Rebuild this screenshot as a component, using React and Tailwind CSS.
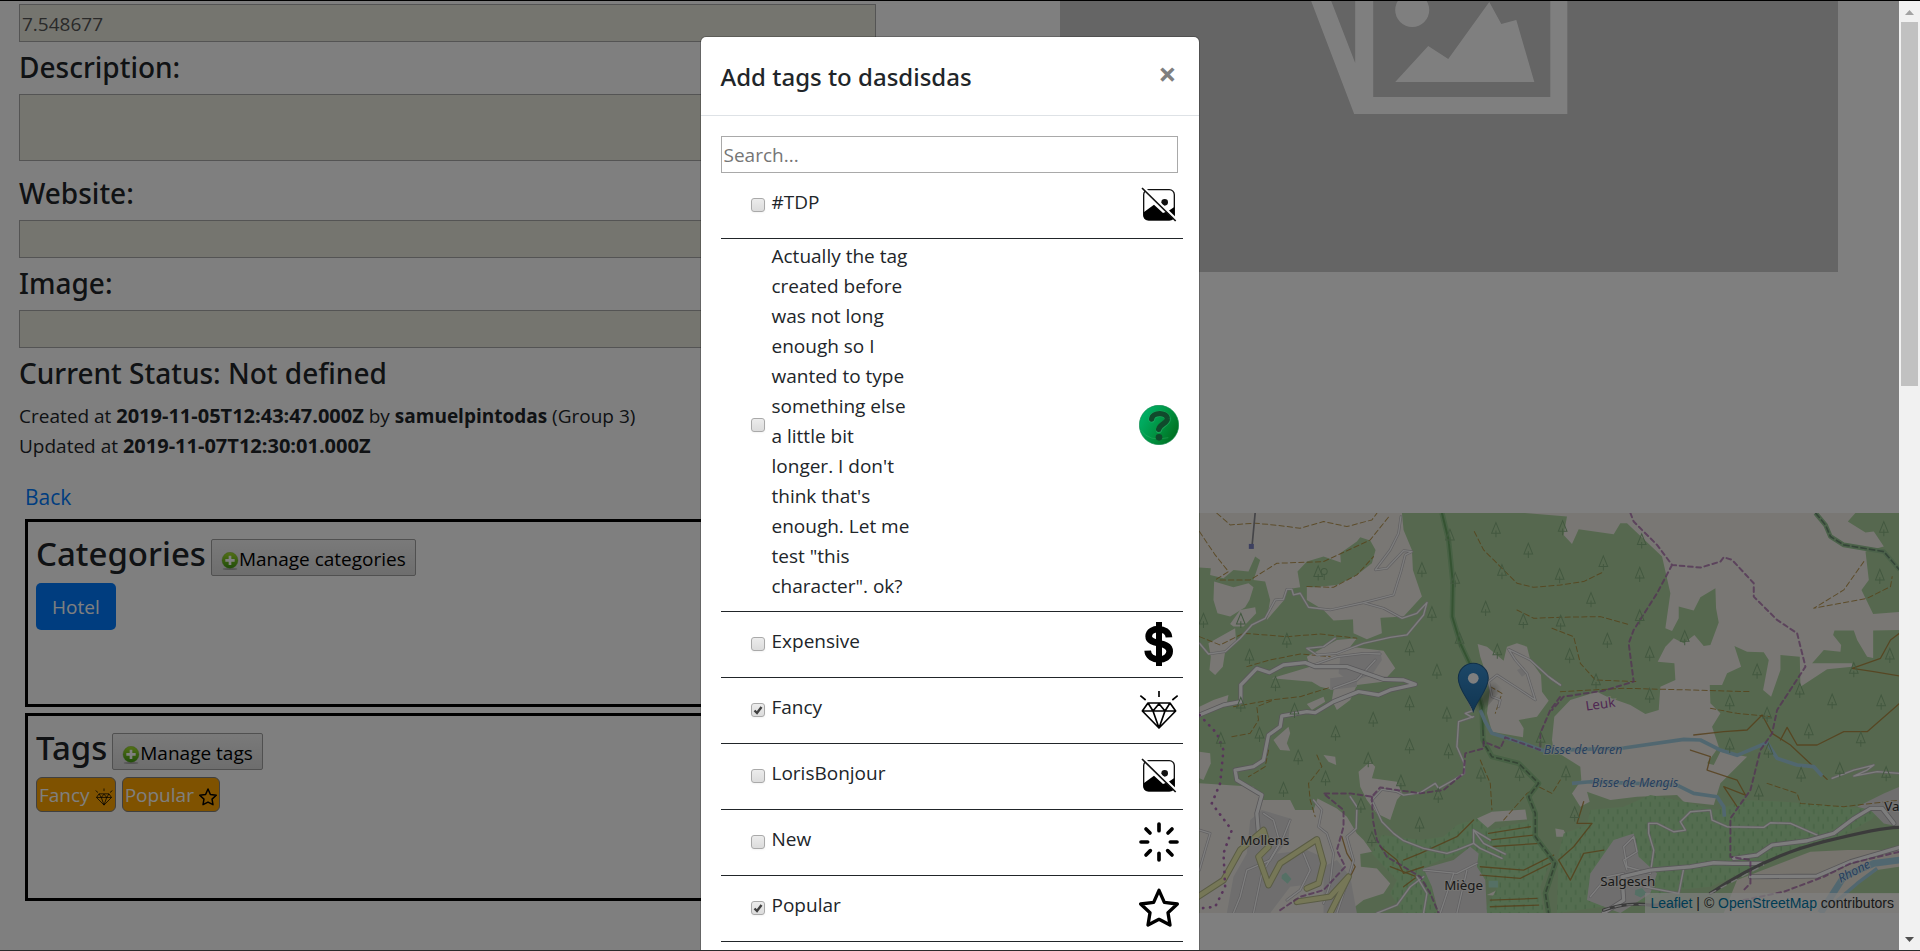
import React from "react";

const LAND = [
  "28,39 635,39 640,90 665,150 668,210 695,290 640,350 600,352 430,362 400,330 350,300 350,260 370,262 440,255 500,225 545,190 556,150 540,122 510,112 500,125 450,160 452,188 400,170 350,185 322,215 330,262 290,268 282,300 230,360 240,300 225,245 190,240 210,180 195,170 175,215 130,210 100,235 60,225 62,205 28,203",
  "72,245 130,262 175,250 190,262 178,300 165,322 120,350 82,340 70,300",
  "120,372 150,330 195,322 198,340 160,380 130,380",
  "55,430 135,385 138,430 105,455 98,500 75,525 58,510 62,470",
  "488,350 570,348 575,400 530,418 490,400",
  "245,535 360,500 350,470 440,420 500,415 480,440 580,452 615,505 578,545 500,555 480,600 440,630 425,600 430,570 390,560 365,545",
  "350,612 400,590 405,605 365,630",
  "250,720 295,680 300,700 290,730 300,752 270,750",
  "28,620 70,600 115,585 110,610 60,630 28,640",
  "400,765 435,770 438,795 415,785",
  "28,755 60,760 62,790 40,840 28,835",
  "862,432 890,440 940,482 950,440 980,430 1010,440 1020,480 1052,525 1055,575 1075,602 1040,650 985,660 1000,685 998,712 905,695 890,640 900,560 880,500 870,470",
  "28,850 190,860 215,900 300,900 315,930 370,930 382,895 440,925 470,950 500,1000 520,1020 545,1055 510,1062 512,1100 560,1105 600,1150 580,1180 520,1200 470,1239 28,1239",
  "505,815 540,785 555,800 545,835 620,845 636,880 620,900 600,960 560,940 530,900 510,860",
  "860,955 905,935 1005,928 1010,958 915,965 890,985",
  "930,1165 1015,1165 1018,1195 890,1185",
  "1095,985 1120,990 1130,1010 1098,1010",
];
const LAND_EAST = [
  "-80,39 50,50 40,105 65,132 85,88 190,103 210,70 230,70 335,170 360,280 345,385 365,393 385,355 385,320 430,332 450,292 495,265 497,325 505,368 480,435 460,438 432,405 400,430 370,415 345,440 322,485 372,490 375,540 330,560 325,630 285,642 240,615 170,590 140,575 60,600 12,650 5,720 10,750 90,800 93,840 65,880 90,920 118,905 110,875 180,900 260,890 380,885 400,905 490,915 510,850 590,770 510,755 490,795 470,790 505,740 485,680 510,640 480,610 478,555 515,555 530,520 572,500 552,438 590,455 640,457 655,480 638,570 662,590 690,510 690,465 748,470 750,560 830,508 905,500 905,490 785,490 820,450 870,455 872,435 848,405 852,392 910,392 920,420 950,470 968,474 968,392 1060,390 1060,335 968,342 933,270 955,240 945,155 1000,140 970,95 945,98 892,65 915,39",
];
const VINES = [
  "575,1005 690,1020 760,1010 800,975 860,955 900,990 1025,960 1030,1010 1085,1075 1070,1110 1050,1160 1060,1239 880,1239 920,1165 860,1110 850,1040 780,1070 700,1100 720,1150 740,1239 640,1239 600,1180 620,1140 545,1060",
];
const VINES_EAST = [
  "20,1239 25,1060 40,1000 110,975 120,930 220,920 300,885 380,900 500,930 590,900 700,905 820,915 990,930 960,960 880,1005 780,1040 640,1090 480,1160 380,1170 300,1200",
];
const TOWNS = [
  "180,960 215,930 300,955 295,1020 260,1060 350,1050 395,1070 380,1150 300,1160 240,1239 110,1239 130,1130 170,1060",
  "450,470 570,452 575,480 545,525 480,545 445,520",
  "420,535 500,525 500,560 420,570",
  "700,1105 790,1080 840,1040 865,1060 860,1100 885,1140 890,1239 745,1239 725,1160",
  "400,1100 440,1080 480,1130 500,1239 400,1239",
  "1200,1120 1270,1020 1330,1000 1345,1070 1400,1120 1380,1180 1290,1239 1190,1200",
  "2000,920 2080,880 2127,860 2127,980 2080,970 2040,930",
  "980,510 1000,500 1010,520 995,530",
];
const TREES = [
  [40, 360], [152, 360], [290, 420], [178, 468], [256, 550], [152, 612], [313, 630], [208, 702], [92, 718], [324, 770],
  [436, 698], [549, 657], [658, 608], [658, 443], [740, 513], [725, 340], [695, 208], [779, 108], [795, 238], [886, 324],
  [917, 88], [1014, 150], [935, 214], [999, 362], [808, 418], [921, 452], [770, 642], [658, 737], [775, 752], [872, 822],
  [988, 820], [632, 845], [744, 885], [534, 778], [406, 833], [280, 867], [512, 915], [688, 972], [545, 1015], [384, 218],
  [1051, 715], [1117, 82], [1239, 188], [1108, 226], [1348, 222], [1354, 122], [1202, 298], [1348, 350], [1111, 366], [1251, 420],
  [1138, 466], [1378, 460], [1217, 542], [1378, 585], [1700, 512], [1618, 605], [1730, 642], [1828, 570], [1925, 602], [2072, 605],
  [1855, 692], [2011, 716], [1618, 735], [1734, 750], [1832, 822], [1948, 808], [2087, 820], [1705, 876], [1153, 940], [1127, 818],
  [2080, 85], [2068, 228], [2098, 465], [1990, 508], [1483, 412],
];
const MINOR = [
  "28,430 55,462 105,455 150,415 185,375 225,355 255,300 280,298 290,268 305,268 310,285 330,280 355,322 420,330 520,308 610,285 632,215 645,165 665,155 640,152 590,205 555,210 600,150 625,100 632,50",
  "520,308 580,325 635,355 680,340 710,308 700,345 650,405 600,412 520,430 440,460 380,465 350,445 400,440 435,415",
  "370,495 440,470 520,460 570,462",
  "430,565 500,540 555,480",
  "1110,555 1075,530 1020,480 955,448 975,480 1010,520 1035,600 990,570 920,525 895,545 905,590 930,600 925,620",
  "846,652 825,640 848,632 835,600",
  "850,650 805,665 800,740 822,790 822,820 790,840 745,865 735,850 690,878 640,885 620,875 575,868 545,900",
  "545,900 575,965 610,1000 640,1022 700,1045 770,1060 800,1050 850,1030 850,990 900,1020",
  "850,1030 870,1045 935,1075",
  "850,990 880,1030 945,1062",
  "370,900 395,930 385,980 410,1000 430,1060 420,1150 400,1210",
  "480,890 500,920 498,985 470,1010 490,1080 470,1150 440,1239",
  "220,940 250,960 270,1030 240,1080 170,1110 150,1190 130,1239",
  "300,960 280,1010 215,1120 190,1239",
  "340,1060 360,1110 330,1170 290,1200",
  "700,1110 800,1120 860,1090",
  "680,1130 710,1180 700,1239",
  "790,1120 750,1239",
  "830,1110 800,1239",
  "28,990 60,1000 45,1050 28,1110",
  "560,1239 620,1215 660,1160 700,1130",
  "1080,535 1110,555",
  "1925,835 1990,810 2050,795 2030,810 1990,828 2060,815 2127,820",
  "1310,1110 1300,1080 1340,1055 1330,1010 1300,1040 1310,1100 1380,1120 1390,1050 1375,1000 1375,970 1400,970 1450,995 1485,990 1470,965 1500,935 1560,930 1565,960 1610,980 1720,982 1740,968 1800,970 1880,1005",
  "1200,1190 1250,1130 1300,1120",
  "1480,1105 1465,1180 1360,1160",
];
const MAJOR = [
  "28,645 100,615 152,605 152,555 200,505 238,518 280,495 345,488 375,500 470,500 580,538 640,540 675,553 600,570 565,585 505,575 430,605 375,638 350,635 275,648 270,680 235,705 220,780 190,800 135,810 140,840 215,885 200,940 205,1000",
  "1240,1239 1300,1200 1295,1130 1380,1110 1500,1100 1570,1088 1630,1090 1715,1090",
  "1630,1075 1700,1065 1745,1035 1850,1022 1930,1000 1990,955 2040,925 2075,925 2110,970",
  "1680,1130 1880,1128 1980,1085 2127,1042",
];
const TRACKS = [
  "80,40 120,75 195,70 250,75 330,85 400,65 470,80 545,60 560,40",
  "28,95 75,165 115,215 75,240",
  "90,240 180,240 260,190 400,185 540,120 600,45",
  "350,260 430,262 500,225 550,170",
  "28,410 90,435 160,400 290,410 390,402 500,415",
  "170,500 240,480 330,462 420,470",
  "130,620 240,600 330,590 420,562",
  "125,710 180,700 205,660 200,620 250,600",
  "380,765 395,800 355,850 360,900 375,950",
  "235,750 225,800 175,830",
  "852,95 880,150 930,200 980,250 1030,262 1110,255 1180,245 1235,218",
  "980,330 1030,355 1110,352 1230,350 1320,375",
  "1085,385 1150,410 1170,490 1215,540 1340,545",
  "1110,575 1300,565 1500,570 1680,575",
  "870,780 900,850 905,930",
  "940,960 1010,880 1045,860 1085,880 1110,840",
  "2020,185 1960,270 1870,325 2030,295 2100,260 2105,230",
  "1730,850 1820,880 1830,910 1960,920 2127,900",
  "1560,625 1640,640 1740,650",
  "900,560 935,580 915,640",
];
const PATHS = [
  "1510,705 1600,695 1670,690 1715,645 1745,700 1800,735 1910,838",
  "1770,720 1790,682 1820,735 1880,735 1960,695 2030,695 2127,610",
  "1985,505 2070,475 2100,420 2127,400",
  "1985,505 2050,515 2127,528",
  "1500,750 1560,770 1550,810 1640,840 1665,885 1600,860 1640,920",
  "1180,905 1160,970 1205,970 1150,1040 1105,1080 1140,1140 1180,1060 1240,1050",
  "570,1040 620,1080 640,1120 700,1100",
  "640,1080 690,1060 800,1010 850,960",
  "600,1100 680,1130 640,1160",
  "895,1000 1020,980", "895,1020 1030,1005", "895,1040 1050,1030", "870,1100 1000,1110 1090,1065", "870,1125 990,1135 1080,1090",
  "900,1200 1040,1195", "900,1220 1045,1215",
  "455,1010 470,1060 495,1100 470,1150",
];
const BORDERS = [
  "270,1230 330,1190 400,1170 465,1100 440,1050 460,980 460,930 400,880 480,880 545,890 570,862 620,870 690,880 760,870 820,820 825,760 880,745 880,725 930,745 945,712 1050,750 1050,700 1080,630 1110,590",
  "545,890 548,960 560,1020 590,1070 690,1130 720,1180 745,1239",
  "1320,39 1330,65 1400,135 1445,195 1530,203 1590,185 1600,172 1625,180 1690,250 1690,290 1760,360 1820,400 1845,500 1760,630 1745,700 1710,750 1680,870 1620,955 1620,1070 1680,1080 1680,1150 1660,1170",
  "1445,195 1400,280 1330,390 1315,430 1330,545 1240,572 1120,590 1085,630",
  "1660,1200 1780,1175 1900,1130 1980,1090 2127,1055",
];

function Lines({ items, ...rest }) {
  return (
    <g fill="none" strokeLinejoin="round" strokeLinecap="round" {...rest}>
      {items.map((p) => <polyline key={p} points={p} />)}
    </g>
  );
}
function Areas({ items, ...rest }) {
  return <g {...rest}>{items.map((p) => <polygon key={p} points={p} />)}</g>;
}

function RegionMap() {
  return (
    <svg className="block h-full w-full" viewBox="-720 39 2847 1200" preserveAspectRatio="xMaxYMid slice" role="img" aria-label="Map of Leuk region">
      <defs>
        <pattern id="vine" width="28" height="44" patternUnits="userSpaceOnUse">
          <rect width="28" height="44" fill="#a9dba0" />
          <path d="M6 4v14M20 26v14" stroke="#86bf84" strokeWidth="3" />
        </pattern>
        <linearGradient id="pin" x1="0" y1="0" x2="0" y2="1">
          <stop offset="0" stopColor="#3a8fd0" />
          <stop offset="1" stopColor="#226da6" />
        </linearGradient>
        <filter id="soft"><feGaussianBlur stdDeviation="9" /></filter>
      </defs>
      <rect x="-720" y="39" width="2847" height="1200" fill="#add19e" />
      <Areas items={LAND} fill="#f2efe9" />
      <Areas items={LAND_EAST} fill="#f2efe9" transform="translate(1080 0)" />
      <Areas items={VINES} fill="url(#vine)" />
      <Areas items={VINES_EAST} fill="url(#vine)" transform="translate(1080 0)" />
      <polygon points="1640,1140 1860,1055 1970,1050 2127,1050 2127,1239 1600,1239" fill="#eee8dc" />
      <polygon points="1960,1180 2060,1110 2127,1100 2127,1180" fill="#add19e" />
      <Areas items={TOWNS} fill="#dedddd" />
      <path d="M275 1125l12-8 17 20-12 14-18-16zM895 1142l28 0 0 20-28 0zM1335 1170l20-6 14 16-18 12-18-8z" fill="#aae0cb" />

      <Lines items={TRACKS} stroke="#ac8331" strokeWidth="3" strokeDasharray="16 9" opacity="0.8" />
      <Lines items={PATHS} stroke="#ac7d32" strokeWidth="4" opacity="0.8" />
      <g fill="none" strokeLinejoin="round">
        <path d="M755 39L775 120 788 250 786 350 810 430 838 490 875 620 878 720 905 770 985 790 1045 850 1015 890 1035 940 1035 1010 1095 1090 1065 1180 1075 1239" stroke="#88be84" strokeWidth="16" opacity="0.8" />
        <path d="M755 39L775 120 788 250 786 350 810 430 838 490 875 620 878 690" stroke="#6aa765" strokeWidth="6" />
        <path d="M878 690L880 730 905 770 985 790 1045 850 1015 890 1035 940 1035 1010 1095 1090 1065 1180 1075 1239" stroke="#688a68" strokeWidth="5" strokeDasharray="18 7" />
        <path d="M1875 39L1905 75 1920 110 1960 135 2080 155 2127 210" stroke="#98c594" strokeWidth="14" />
        <path d="M1875 39L1905 75 1920 110 1960 135 2080 155 2127 210" stroke="#688a70" strokeWidth="5" strokeDasharray="20 6" />
      </g>

      <g fill="none" stroke="#a3cfe0" strokeWidth="11" strokeLinejoin="round">
        <path d="M870 630L885 665 905 700 1000 730 1060 752 1180 748 1300 744 1480 718 1530 720 1590 750 1640 766 1730 728 1760 775 1820 795 1870 800 1895 828" />
        <path d="M1145 850L1200 845 1460 855 1510 880 1580 890 1600 920 1602 950" />
        <path d="M1890 1239L1960 1130 2050 1090 2127 1080" strokeWidth="20" />
        <path d="M1930 1210L2000 1150 2060 1105" strokeWidth="10" />
      </g>

      <Lines items={MINOR} stroke="#c2bfc2" strokeWidth="8" />
      <Lines items={MINOR} stroke="#fbfbfb" strokeWidth="4" />
      <Lines items={MAJOR} stroke="#b2afb3" strokeWidth="15" />
      <Lines items={MAJOR} stroke="#fbfbfb" strokeWidth="10" />
      <g fill="none" strokeLinejoin="round" strokeLinecap="round">
        <path d="M0 1205L100 1140 150 1050 220 990 235 1040 205 1070 235 1155 270 1090 380 1018 400 1090 385 1150 350 1165 M320 1205L420 1190 475 1130 420 1239" stroke="#b5b88a" strokeWidth="20" />
        <path d="M0 1205L100 1140 150 1050 220 990 235 1040 205 1070 235 1155 270 1090 380 1018 400 1090 385 1150 350 1165 M320 1205L420 1190 475 1130 420 1239" stroke="#ecefae" strokeWidth="14" />
        <path d="M1560 1180Q1720 1070 1900 1025T2127 982M1240 1230Q1310 1205 1380 1215L1480 1215" stroke="#777777" strokeWidth="10" />
        <path d="M1560 1180L1720 1095M1240 1230Q1300 1208 1370 1215" stroke="#e6e6e6" strokeWidth="4" strokeDasharray="18 18" />
      </g>

      <Lines items={BORDERS} stroke="#a565a8" strokeWidth="6" strokeDasharray="14 11" opacity="0.75" />
      <Lines items={["28,645 80,700 100,750 90,850 65,910 125,990 100,1060 105,1160 75,1220 28,1225"]} stroke="#b06cb5" strokeWidth="8" strokeDasharray="1 20" />
      <path d="M195 39L186 135" stroke="#8a8a90" strokeWidth="5" />
      <rect x="176" y="132" width="15" height="15" fill="#7b80c0" />

      <g fill="none" stroke="#86b080" strokeWidth="3">
        {TREES.map(([x, y]) => (
          <path key={`${x}-${y}`} d={`M${x} ${y - 20}L${x + 13} ${y + 12}H${x - 13}ZM${x} ${y + 4}V${y + 24}`} />
        ))}
        <circle cx="402" cy="215" r="9" />
        <path d="M402 224v16" />
      </g>

      <ellipse cx="888" cy="590" rx="42" ry="18" transform="rotate(-50 888 590)" fill="#000" opacity="0.3" filter="url(#soft)" />
      <path d="M849 634C838 600 804 570 804 535a45 45 0 0 1 90 0C894 570 860 600 849 634Z" fill="url(#pin)" stroke="#245f90" strokeWidth="3" />
      <circle cx="849" cy="535" r="16" fill="#fff" />

      <g fontFamily="'Noto Sans', sans-serif" fontSize="40" textAnchor="middle" stroke="#f4f1ec" strokeWidth="6" strokeOpacity="0.7" paintOrder="stroke" fill="#333">
        <text x="224" y="1036">Mollens</text>
        <text x="820" y="1171">Miège</text>
        <text x="1312" y="1157">Salgesch</text>
        <text x="2104" y="933">Va</text>
        <text x="1230" y="626" fill="#a04fa5" transform="rotate(-8 1230 612)">Leuk</text>
      </g>
      <g fontFamily="'Noto Sans', sans-serif" fontSize="37" fontStyle="italic" textAnchor="middle" stroke="#f4f1ec" strokeWidth="5" strokeOpacity="0.6" paintOrder="stroke" fill="#4f80bc">
        <text x="1178" y="761">Bisse de Varen</text>
        <text x="1334" y="860">Bisse de Mengis</text>
        <text x="1990" y="1126" transform="rotate(-28 1990 1112)">Rhone</text>
      </g>
    </svg>
  );
}

function NoImageIcon({ className }) {
  return (
    <svg className={className} viewBox="0 0 120 120" aria-hidden="true">
      <rect x="14" y="14" width="92" height="91" rx="15" fill="none" stroke="#111" strokeWidth="4" />
      <path d="M14 82L45 59 72 84 88 78 106 66V92Q106 105 92 105H28Q14 105 14 92Z" fill="#000" />
      <circle cx="77" cy="52" r="10" fill="#111" />
      <path d="M14 8L113 104" stroke="#fff" strokeWidth="7" />
      <path d="M9 9L110 108" stroke="#111" strokeWidth="5" />
    </svg>
  );
}
function HelpIcon({ className }) {
  return (
    <svg className={className} viewBox="0 0 120 120" aria-hidden="true">
      <defs>
        <linearGradient id="help" x1="0" y1="0.2" x2="1" y2="0.8">
          <stop offset="0" stopColor="#00b46c" />
          <stop offset="0.55" stopColor="#00913f" />
          <stop offset="1" stopColor="#006a1c" />
        </linearGradient>
      </defs>
      <circle cx="60" cy="60" r="59" fill="url(#help)" stroke="#128a50" strokeWidth="2" />
      <path d="M6 76Q30 112 88 98" fill="none" stroke="#35b96c" strokeWidth="2" opacity="0.6" />
      <path d="M38 43C40 22 84 20 86 42C87 56 62 58 60 75" fill="none" stroke="#3fbf7c" strokeWidth="19" strokeLinecap="round" opacity="0.4" />
      <path d="M38 42C40 21 84 20 85 41C86 55 62 57 59 73" fill="none" stroke="#104a2c" strokeWidth="16" strokeLinecap="round" />
      <circle cx="60" cy="97" r="10" fill="#104a2c" />
    </svg>
  );
}
function DollarIcon({ className }) {
  return (
    <svg className={className} viewBox="0 0 120 132" aria-hidden="true">
      <path d="M60 0V132" stroke="#000" strokeWidth="18" />
      <path d="M90 46C88 14 30 14 29 43C29 72 92 56 92 88C92 120 28 122 26 86" fill="none" stroke="#000" strokeWidth="20" />
    </svg>
  );
}
function GemIcon({ className }) {
  return (
    <svg className={className} viewBox="0 0 120 120" fill="none" stroke="#000" strokeWidth="5" strokeLinejoin="round" aria-hidden="true">
      <path d="M27 39H93L110 63 60 114 10 63ZM10 63H110M27 39L42 63 60 41 78 63 93 39M42 63L60 114 78 63" />
      <path d="M60 3V21M4 17L20 30M116 17L100 30" />
    </svg>
  );
}
function BurstIcon({ className }) {
  return (
    <svg className={className} viewBox="0 0 120 120" fill="none" stroke="#000" strokeWidth="11" strokeLinecap="round" aria-hidden="true">
      <path d="M60 6V26M60 94V114M6 60H26M94 60H114M21 21L33 33M99 21L87 33M21 99L34 86M99 99L86 86" />
    </svg>
  );
}
function StarIcon({ className }) {
  return (
    <svg className={className} viewBox="0 0 120 120" fill="none" stroke="#000" strokeWidth="10" strokeLinejoin="round" aria-hidden="true">
      <path d="M60 7L76 43 115 48 87 74 93 111 60 94 27 111 33 74 5 48 44 43Z" />
    </svg>
  );
}
function PlusIcon() {
  return (
    <svg className="mt-1 size-[18px] shrink-0" viewBox="0 0 54 54" aria-hidden="true">
      <defs>
        <linearGradient id="plus" x1="0" y1="0" x2="0" y2="1">
          <stop offset="0" stopColor="#a6e02c" />
          <stop offset="1" stopColor="#3f9a12" />
        </linearGradient>
      </defs>
      <ellipse cx="27" cy="51" rx="22" ry="3" fill="#000" opacity="0.25" />
      <circle cx="27" cy="25" r="24" fill="url(#plus)" stroke="#5d9a20" />
      <path d="M27 11V39M13 25H41" stroke="#fff" strokeWidth="8" />
    </svg>
  );
}

const TAGS = [
  { name: "#TDP", Icon: NoImageIcon },
  { name: "Actually the tag created before was not long enough so I wanted to type something else a little bit longer. I don't think that's enough. Let me test \"this character\". ok?", Icon: HelpIcon },
  { name: "Expensive", Icon: DollarIcon, tall: true },
  { name: "Fancy", Icon: GemIcon, checked: true },
  { name: "LorisBonjour", Icon: NoImageIcon },
  { name: "New", Icon: BurstIcon },
  { name: "Popular", Icon: StarIcon, checked: true },
];

function TagRow({ id, name, Icon, checked, tall }) {
  return (
    <li className="flex items-center border-b border-[#212529] pt-[2px] pb-[10px] pl-[30px]">
      <span className="mt-[7px] grid size-[14px] shrink-0">
        <input
          id={id}
          type="checkbox"
          defaultChecked={checked}
          className="peer col-start-1 row-start-1 size-[14px] appearance-none rounded-[3px] border border-[#a9a9a9] bg-linear-to-b from-[#ececec] to-[#dcdcdc] shadow-xs"
        />
        <svg className="pointer-events-none invisible col-start-1 row-start-1 size-[14px] peer-checked:visible" viewBox="0 0 14 14" aria-hidden="true">
          <path d="M3.5 7.5L6 10 10.500 4" fill="none" stroke="#404040" strokeWidth="2.400" />
        </svg>
      </span>
      <label htmlFor={id} className="ml-[7px] min-h-[53px] w-[144px] content-center">
        {name}
      </label>
      <Icon className={tall ? "mt-[7px] mr-1 ml-auto h-[44px] w-[40px]" : "mt-[7px] mr-1 ml-auto size-[40px]"} />
    </li>
  );
}

function TagDialog() {
  return (
    <section role="dialog" aria-modal="true" aria-labelledby="dialog-title" className="w-[500px] rounded-[6px] border border-black/20 bg-white bg-clip-padding">
      <header className="flex items-start justify-between border-b border-[#dee2e6] px-5 pt-[21px] pb-[19px]">
        <h5 id="dialog-title" className="font-['Noto_Sans','Open_Sans',sans-serif] text-[24px] leading-[38px] font-medium">Add tags to dasdisdas</h5>
        <button type="button" aria-label="Close" className="px-[2px] text-[32px] leading-[32px] font-bold text-[#7f7f7f]">×</button>
      </header>
      <div className="pt-5 pr-4 pl-5">
        <div className="pr-[5px]">
          <input type="text" aria-label="Search tags" placeholder="Search..." className="block h-[37px] w-full border border-[#a9a9a9] px-[2px] placeholder:text-[#757575]" />
        </div>
        <ul>
          {TAGS.map((tag, i) => <TagRow key={tag.name} id={`tag-${i}`} {...tag} />)}
        </ul>
        <div className="h-20" />
      </div>
    </section>
  );
}

const FIELD = "block w-[94%] border border-[#a9a9a9] bg-[#ebebdf] px-[2px] text-[#545454]";
const HEADING = "block pt-[3px] pb-[5px] font-['Noto_Sans','Open_Sans',sans-serif] text-[28px] leading-[44px] font-medium";
const SECTION_TITLE = "font-['Noto_Sans','Open_Sans',sans-serif] text-[33px] leading-[48px] font-medium";
const MANAGE = "mt-[9px] flex h-[37px] items-center rounded-[2px] border border-[#a0a0a0] bg-linear-to-b from-[#f4f4f4] to-[#dcdcdc] px-[9px] pt-[2px] text-black";
const CHIP = "flex h-[35px] items-center gap-[5px] rounded-[6px] border border-[#808080] bg-[#ffa500] px-[2px] text-white";

function PlaceDetails() {
  return (
    <div className="w-1/2 shrink-0 px-[19px] pt-[3px]">
      <input aria-label="Longitude" readOnly defaultValue="7.548677" className={`${FIELD} h-[38px] pt-[2px]`} />
      <label htmlFor="description" className={HEADING}>Description:</label>
      <textarea id="description" readOnly className={`${FIELD} mb-[7px] h-[67px] resize-none`} />
      <label htmlFor="website" className={HEADING}>Website:</label>
      <input id="website" readOnly className={`${FIELD} h-[38px]`} />
      <label htmlFor="image" className={HEADING}>Image:</label>
      <input id="image" readOnly className={`${FIELD} h-[38px]`} />
      <h4 className={HEADING}>Current Status: Not defined</h4>
      <div className="pt-px">
        <p>Created at <b className="text-[20px]">2019-11-05T12:43:47.000Z</b> by <b>samuelpintodas</b> (Group 3)</p>
        <p>Updated at <b className="text-[20px]">2019-11-07T12:30:01.000Z</b></p>
      </div>
      <div className="mt-[18px] ml-[6px]">
        <a href="#back" className="inline-block pb-1 align-top text-[21px] leading-9 text-[#007bff]">Back</a>
        <section className="mb-[6px] h-[188px] border-[3px] border-black px-2">
          <div className="flex items-start gap-[5px] pt-2 pb-[5px]">
            <h3 className={SECTION_TITLE}>Categories</h3>
            <button type="button" className={MANAGE}><PlusIcon />Manage categories</button>
          </div>
          <button type="button" className="h-[47px] rounded-[5px] bg-[#007bff] px-4 text-white">Hotel</button>
        </section>
        <section className="h-[188px] border-[3px] border-black px-2">
          <div className="flex items-start gap-[5px] pt-2 pb-[5px]">
            <h3 className={SECTION_TITLE}>Tags</h3>
            <button type="button" className={MANAGE}><PlusIcon />Manage tags</button>
          </div>
          <div className="flex gap-[6px]">
            <span className={CHIP}>Fancy <GemIcon className="mt-1 size-[18px]" /></span>
            <span className={CHIP}>Popular <StarIcon className="mt-1 size-[18px]" /></span>
          </div>
        </section>
      </div>
    </div>
  );
}

function PlaceMedia() {
  return (
    <div className="w-1/2 shrink-0">
      <div className="pr-[61px] pl-[110px]">
        <svg className="block h-[271px] w-full bg-[#cacaca]" viewBox="0 0 778 271" preserveAspectRatio="xMinYMin slice" role="img" aria-label="No picture available">
          <g fill="#ffffff">
            <path fillRule="evenodd" d="M251 0H271L295 62V0H313V96H490V0H507V113H294Z" />
            <circle cx="352" cy="9" r="17" />
            <path d="M335 81L368 45 388 58 429 1 441 23 456 19 474 81Z" />
          </g>
        </svg>
      </div>
      <div className="relative mt-[241px] h-[400px]">
        <RegionMap />
        <p className="absolute right-0 bottom-0 bg-white/70 px-[5px] font-['Liberation_Sans',sans-serif] text-[14px] leading-5 text-[#333]">
          <a href="#leaflet" className="text-[#0078a8]">Leaflet</a> | © <a href="#osm" className="text-[#0078a8]">OpenStreetMap</a> contributors
        </p>
      </div>
    </div>
  );
}

function ScrollBar() {
  return (
    <div aria-hidden="true" className="flex w-[21px] shrink-0 flex-col items-center bg-[#f1f1f1]">
      <svg className="h-[21px] w-[21px] shrink-0" viewBox="0 0 21 21"><path d="M6 14H15L10.500 9Z" fill="#a3a3a3" /></svg>
      <div className="h-[364px] w-[17px] bg-[#c1c1c1]" />
      <svg className="mt-auto h-[21px] w-[21px] shrink-0" viewBox="0 0 21 21"><path d="M6 8H15L10.500 13Z" fill="#505050" /></svg>
    </div>
  );
}

export default function App() {
  return (
    <div className="flex h-screen overflow-hidden border-t border-b border-t-black border-b-[#2b2b2b] bg-white font-['Open_Sans','Noto_Sans',sans-serif] text-[19px] leading-[30px] text-[#212529]">
      <main className="relative flex min-w-0 flex-1 overflow-hidden">
        <PlaceDetails />
        <PlaceMedia />
        <div className="absolute inset-0 flex items-start justify-center overflow-hidden bg-black/50 pt-[35px]">
          <TagDialog />
        </div>
      </main>
      <ScrollBar />
    </div>
  );
}
